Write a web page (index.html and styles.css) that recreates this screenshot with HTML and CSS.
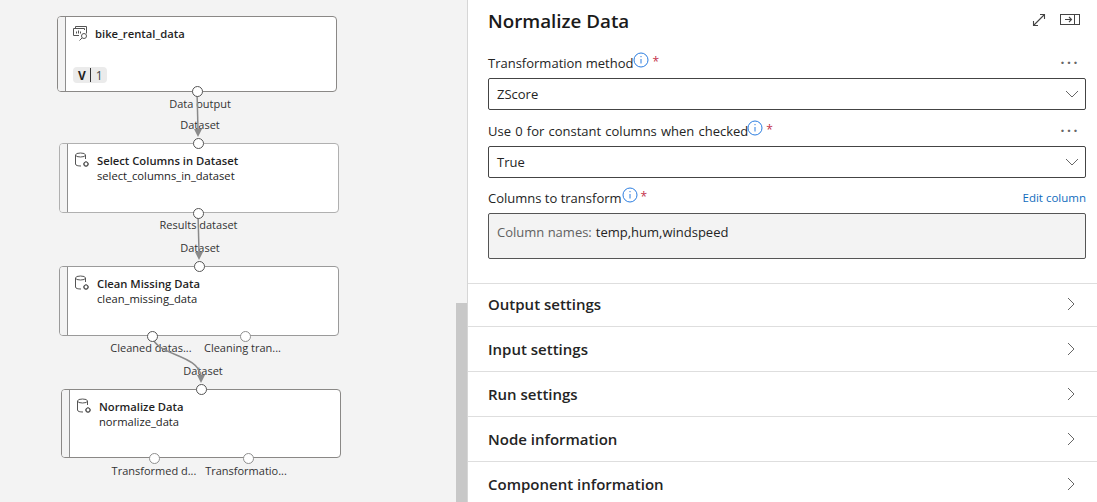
FILE: index.html
```html
<!DOCTYPE html>
<html lang="en">
<head>
<meta charset="utf-8">
<title>Normalize Data</title>
<link rel="stylesheet" href="styles.css">
</head>
<body>
<div class="app">
  <main class="canvas">
    <svg class="wires" width="456" height="502" viewBox="0 0 456 502" fill="none">
      <g stroke="#8a8a8a" stroke-width="1.500">
        <path d="M197 91 L198 130"/>
        <path d="M198 213 L199 252"/>
        <path d="M152 336 C156 356 198 354 201 376"/>
      </g>
      <g fill="#8a8a8a">
        <path d="M194 129 h8 l-4 8 z"/>
        <path d="M195 252 h8 l-4 8 z"/>
        <path d="M197 375 h8 l-4 8 z"/>
      </g>
    </svg>

    <section class="node node-a">
      <div class="node-body">
        <svg class="icon" width="16" height="16" viewBox="0 0 16 16" fill="none" stroke="#555" stroke-width="1">
          <path d="M3.500 3 V1.500 H14.500 V8.500"/>
          <path d="M1.500 3.500 H12.500 V5"/>
          <path d="M1.500 3.500 V10.500 H7"/>
          <path d="M4.500 8.500 V6.500 M6.500 8.500 V5.500 M8.500 8.500 V6.500"/>
          <circle cx="12" cy="11" r="2.500"/>
          <path d="M10 13 L7.500 15.500"/>
        </svg>
        <div class="titles"><div class="name">bike_rental_data</div></div>
      </div>
      <div class="version"><b>V</b><i></i><span>1</span></div>
    </section>

    <section class="node node-b">
      <div class="node-body">
        <svg class="icon" width="16" height="16" viewBox="0 0 16 16" fill="none" stroke="#555" stroke-width="1">
          <ellipse cx="6.500" cy="3" rx="5" ry="2"/>
          <path d="M1.500 3 V12 C1.500 13.500 4 14 7 14 M11.500 3 V7"/>
          <circle cx="12" cy="12" r="2" stroke-width="1.200"/>
          <path d="M12 9 V10 M12 14 V15 M9 12 H10 M14 12 H15 M10 10 L10.700 10.700 M13.300 13.300 L14 14 M14 10 L13.300 10.700 M10.700 13.300 L10 14"/>
        </svg>
        <div class="titles"><div class="name">Select Columns in Dataset</div><div class="sub">select_columns_in_dataset</div></div>
      </div>
    </section>

    <section class="node node-c">
      <div class="node-body">
        <svg class="icon" width="16" height="16" viewBox="0 0 16 16" fill="none" stroke="#555" stroke-width="1">
          <ellipse cx="6.500" cy="3" rx="5" ry="2"/>
          <path d="M1.500 3 V12 C1.500 13.500 4 14 7 14 M11.500 3 V7"/>
          <circle cx="12" cy="12" r="2" stroke-width="1.200"/>
          <path d="M12 9 V10 M12 14 V15 M9 12 H10 M14 12 H15 M10 10 L10.700 10.700 M13.300 13.300 L14 14 M14 10 L13.300 10.700 M10.700 13.300 L10 14"/>
        </svg>
        <div class="titles"><div class="name">Clean Missing Data</div><div class="sub">clean_missing_data</div></div>
      </div>
    </section>

    <section class="node node-d">
      <div class="node-body">
        <svg class="icon" width="16" height="16" viewBox="0 0 16 16" fill="none" stroke="#555" stroke-width="1">
          <ellipse cx="6.500" cy="3" rx="5" ry="2"/>
          <path d="M1.500 3 V12 C1.500 13.500 4 14 7 14 M11.500 3 V7"/>
          <circle cx="12" cy="12" r="2" stroke-width="1.200"/>
          <path d="M12 9 V10 M12 14 V15 M9 12 H10 M14 12 H15 M10 10 L10.700 10.700 M13.300 13.300 L14 14 M14 10 L13.300 10.700 M10.700 13.300 L10 14"/>
        </svg>
        <div class="titles"><div class="name">Normalize Data</div><div class="sub">normalize_data</div></div>
      </div>
    </section>

    <span class="port dark p1"></span>
    <span class="port dark p2"></span>
    <span class="port dark p3"></span>
    <span class="port dark p4"></span>
    <span class="port dark p5"></span>
    <span class="port p6"></span>
    <span class="port dark p7"></span>
    <span class="port p8"></span>
    <span class="port p9"></span>

    <span class="plabel l1">Data output</span>
    <span class="plabel l2">Dataset</span>
    <span class="plabel l3">Results dataset</span>
    <span class="plabel l4">Dataset</span>
    <span class="plabel l5">Cleaned datas...</span>
    <span class="plabel l6">Cleaning tran...</span>
    <span class="plabel l7">Dataset</span>
    <span class="plabel l8">Transformed d...</span>
    <span class="plabel l9">Transformatio...</span>

    <div class="scrollthumb"></div>
  </main>

  <aside class="panel">
    <header class="panel-head">
      <h1>Normalize Data</h1>
      <div class="head-icons">
        <svg width="16" height="16" viewBox="0 0 16 16" fill="none" stroke="#444" stroke-width="1.100">
          <path d="M2.500 13.500 L13.500 2.500 M9 2.500 H13.500 V7 M2.500 9 V13.500 H7"/>
        </svg>
        <svg width="22" height="14" viewBox="0 0 22 14" fill="none" stroke="#444" stroke-width="1">
          <rect x="1.500" y="1.500" width="19" height="10"/>
          <path d="M15.500 1.500 V11.500"/>
          <path d="M6 6.500 H12.500 M10 4 L12.500 6.500 L10 9" stroke-width="1.100"/>
        </svg>
      </div>
    </header>

    <div class="form">
      <div class="field">
        <div class="label-row">
          <label class="label">Transformation method</label>
          <svg class="info" width="16" height="16" viewBox="0 0 16 16" fill="none" stroke="#2b7de0"><circle cx="8" cy="8" r="7"/><path d="M8 7 V11.500 M8 4 V5.200"/></svg>
          <span class="req">*</span>
          <span class="dots">···</span>
        </div>
        <div class="select"><span>ZScore</span>
          <svg width="14" height="8" viewBox="0 0 14 8" fill="none" stroke="#666"><path d="M1 1 L7 7 L13 1"/></svg>
        </div>
      </div>
      <div class="field">
        <div class="label-row">
          <label class="label spaced">Use 0 for constant columns when checked</label>
          <svg class="info" width="16" height="16" viewBox="0 0 16 16" fill="none" stroke="#2b7de0"><circle cx="8" cy="8" r="7"/><path d="M8 7 V11.500 M8 4 V5.200"/></svg>
          <span class="req">*</span>
          <span class="dots">···</span>
        </div>
        <div class="select"><span>True</span>
          <svg width="14" height="8" viewBox="0 0 14 8" fill="none" stroke="#666"><path d="M1 1 L7 7 L13 1"/></svg>
        </div>
      </div>
      <div class="field third">
        <div class="label-row">
          <label class="label">Columns to transform</label>
          <svg class="info" width="16" height="16" viewBox="0 0 16 16" fill="none" stroke="#2b7de0"><circle cx="8" cy="8" r="7"/><path d="M8 7 V11.500 M8 4 V5.200"/></svg>
          <span class="req">*</span>
          <a class="edit">Edit column</a>
        </div>
        <div class="readonly"><span class="muted">Column names:</span> temp,hum,windspeed</div>
      </div>
    </div>

    <div class="sections">
      <div class="section first"><span>Output settings</span><svg width="10" height="14" viewBox="0 0 10 14" fill="none" stroke="#666"><path d="M2 1 L8 7 L2 13"/></svg></div>
      <div class="section"><span>Input settings</span><svg width="10" height="14" viewBox="0 0 10 14" fill="none" stroke="#666"><path d="M2 1 L8 7 L2 13"/></svg></div>
      <div class="section"><span>Run settings</span><svg width="10" height="14" viewBox="0 0 10 14" fill="none" stroke="#666"><path d="M2 1 L8 7 L2 13"/></svg></div>
      <div class="section"><span>Node information</span><svg width="10" height="14" viewBox="0 0 10 14" fill="none" stroke="#666"><path d="M2 1 L8 7 L2 13"/></svg></div>
      <div class="section"><span>Component information</span><svg width="10" height="14" viewBox="0 0 10 14" fill="none" stroke="#666"><path d="M2 1 L8 7 L2 13"/></svg></div>
    </div>
  </aside>
</div>
</body>
</html>
```
FILE: styles.css
```css
* { box-sizing: border-box; }
html, body { margin: 0; height: 502px; overflow: hidden; }
body { font-family: "Open Sans", "Noto Sans", sans-serif; color: #1f1f1f; background: #fff; }
.app { display: flex; width: 1097px; height: 502px; }

/* Canvas */
.canvas { position: relative; width: 468px; height: 502px; background: #f3f3f3; flex: none; border-right: 1px solid #d6d6d6; overflow: hidden; }
.wires { position: absolute; left: 0; top: 0; z-index: 2; }
.scrollthumb { position: absolute; left: 456px; top: 303px; width: 11px; height: 199px; background: #c8c8c8; }

.node { position: absolute; width: 280px; background: #fff; border: 1px solid #a0a0a0; border-radius: 4px; }
.node::before { content: ""; position: absolute; left: 0; top: 0; bottom: 0; width: 7px; background: #f3f3f3; border-right: 1px solid #8f8f8f; border-radius: 3px 0 0 3px; }
.node-a { left: 57px; top: 16px; height: 76px; border-color: #8a8886; }
.node-b { left: 59px; top: 143px; height: 70px; border-color: #b0b0b0; }
.node-c { left: 59px; top: 266px; height: 70px; border-color: #9a9a9a; }
.node-d { left: 61px; top: 389px; height: 69px; border-color: #8a8886; }

.node-body { display: flex; gap: 7px; padding: 8px 0 0 14px; }
.icon { flex: none; }
.name { font-size: 11.250px; font-weight: 600; line-height: 17px; color: #1f1f1f; white-space: nowrap; }
.sub { font-size: 11.200px; line-height: 14px; color: #242424; white-space: nowrap; }

.version { position: absolute; left: 15px; bottom: 8px; height: 16px; width: 34px; padding-left: 5px; display: flex; align-items: center; gap: 4px; background: #ebebeb; border-radius: 4px; font-size: 12px; }
.version b { font-weight: 700; flex: none; }
.version i { flex: none; width: 1px; height: 14px; background: #333; }
.version span { color: #444; flex: none; margin-left: 1px; }

.port { position: absolute; z-index: 3; width: 11px; height: 11px; border-radius: 50%; background: #fff; border: 1px solid #8f8f8f; }
.port.dark { border-color: #555; }
.p1 { left: 192px; top: 86px; }
.p2 { left: 193px; top: 138px; }
.p3 { left: 193px; top: 208px; }
.p4 { left: 194px; top: 261px; }
.p5 { left: 147px; top: 331px; }
.p6 { left: 240px; top: 331px; }
.p7 { left: 196px; top: 384px; }
.p8 { left: 149px; top: 453px; }
.p9 { left: 243px; top: 453px; }

.plabel { position: absolute; z-index: 1; font-size: 11px; line-height: 14px; color: #333; white-space: nowrap; transform: translateX(-50%); }
.l1 { left: 200px; top: 97px; }
.l2 { left: 200px; top: 118px; }
.l3 { left: 198.500px; top: 218px; }
.l4 { left: 200px; top: 241px; }
.l5 { left: 151px; top: 341px; }
.l6 { left: 242.500px; top: 341px; }
.l7 { left: 203px; top: 364px; }
.l8 { left: 154px; top: 464px; }
.l9 { left: 246px; top: 464px; }

/* Panel */
.panel { flex: 1; display: flex; flex-direction: column; min-width: 0; overflow: hidden; }
.panel-head { flex: none; display: flex; align-items: center; justify-content: space-between; height: 42px; padding: 0 16px 0 20px; }
.panel-head h1 { margin: 0; font-size: 18.800px; font-weight: 600; color: #1a1a1a; line-height: 26px; }
.head-icons { display: flex; align-items: center; gap: 12px; margin-top: -3px; }

.form { padding: 10px 11px 0 20px; display: flex; flex-direction: column; height: 241px; gap: 10px; flex: none; }
.field { display: flex; flex-direction: column; }
.third { margin-top: -1px; }
.label-row { display: flex; align-items: center; height: 26px; padding-bottom: 5px; font-size: 13px; }
.label { color: #242424; white-space: nowrap; }
.spaced { word-spacing: 0.800px; }
.info { flex: none; margin: -6px 0 0 0; }
.spaced + .info { margin-left: -1px; }
.req { color: #c4314b; margin: -2px 0 0 3px; font-size: 12px; }
.dots { margin-left: auto; margin-right: 6px; color: #666; font-size: 14px; font-weight: 700; letter-spacing: 2.500px; line-height: 1; }
.edit { margin-left: auto; color: #0f6cbd; font-size: 11.500px; }
.select { height: 32px; border: 1px solid #444; border-radius: 2px; display: flex; align-items: center; justify-content: space-between; padding: 0 6px 0 8px; font-size: 13px; color: #242424; }
.readonly { height: 46px; border: 1px solid #555; border-radius: 2px; background: #f3f3f3; display: flex; align-items: center; gap: 4px; padding: 0 8px 8px; font-size: 13px; color: #242424; }
.muted { color: #616161; }

.sections { display: flex; flex-direction: column; }
.section { height: 45px; border-top: 1px solid #dedede; display: flex; align-items: center; justify-content: space-between; padding: 0 21px 0 20px; font-size: 15px; font-weight: 600; color: #242424; flex: none; }
.section.first { height: 43px; padding-bottom: 2px; }
```
